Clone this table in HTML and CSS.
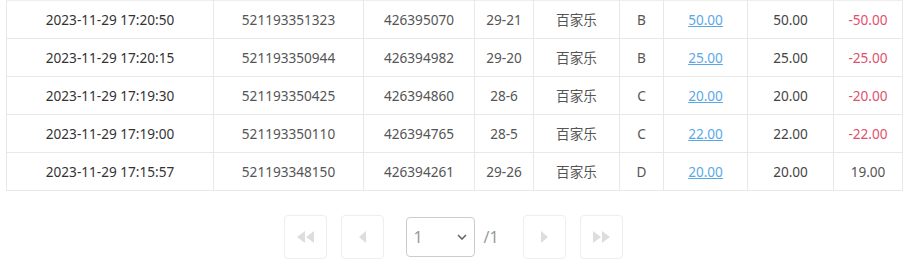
FILE: index.html
```html
<!DOCTYPE html>
<html>
<head>
<meta charset="utf-8">
<link rel="stylesheet" href="styles.css">
</head>
<body>
<div class="wrap">
<table class="grid">
<colgroup>
<col style="width:207px"><col style="width:150px"><col style="width:111px"><col style="width:59px"><col style="width:86px"><col style="width:44px"><col style="width:84px"><col style="width:86px"><col style="width:69px">
</colgroup>
<tbody>
<tr><td class="dt">2023-11-29 17:20:50</td><td>521193351323</td><td>426395070</td><td>29-21</td><td>百家乐</td><td>B</td><td><a class="lnk">50.00</a></td><td class="dk">50.00</td><td class="neg">-50.00</td></tr>
<tr><td class="dt">2023-11-29 17:20:15</td><td>521193350944</td><td>426394982</td><td>29-20</td><td>百家乐</td><td>B</td><td><a class="lnk">25.00</a></td><td class="dk">25.00</td><td class="neg">-25.00</td></tr>
<tr><td class="dt">2023-11-29 17:19:30</td><td>521193350425</td><td>426394860</td><td>28-6</td><td>百家乐</td><td>C</td><td><a class="lnk">20.00</a></td><td class="dk">20.00</td><td class="neg">-20.00</td></tr>
<tr><td class="dt">2023-11-29 17:19:00</td><td>521193350110</td><td>426394765</td><td>28-5</td><td>百家乐</td><td>C</td><td><a class="lnk">22.00</a></td><td class="dk">22.00</td><td class="neg">-22.00</td></tr>
<tr><td class="dt">2023-11-29 17:15:57</td><td>521193348150</td><td>426394261</td><td>29-26</td><td>百家乐</td><td>D</td><td><a class="lnk">20.00</a></td><td class="dk">20.00</td><td>19.00</td></tr>
</tbody>
</table>
<div class="pager">
<button class="pbtn"><svg width="20" height="12" viewBox="0 0 20 12"><path d="M9 0 L1 6 L9 12 Z M18 0 L10 6 L18 12 Z" fill="#ddd"/></svg></button>
<button class="pbtn"><svg width="10" height="12" viewBox="0 0 10 12"><path d="M8 0 L1 6 L8 12 Z" fill="#ddd"/></svg></button>
<div class="sel"><span class="selv">1</span><svg class="chev" width="10" height="6" viewBox="0 0 10 6"><path d="M1 1 L5 5 L9 1" stroke="#666" stroke-width="1.6" fill="none"/></svg></div>
<span class="total">/1</span>
<button class="pbtn nxt"><svg width="10" height="12" viewBox="0 0 10 12"><path d="M2 0 L9 6 L2 12 Z" fill="#ddd"/></svg></button>
<button class="pbtn"><svg width="20" height="12" viewBox="0 0 20 12"><path d="M2 0 L10 6 L2 12 Z M11 0 L19 6 L11 12 Z" fill="#ddd"/></svg></button>
</div>
</div>
</body>
</html>
```
FILE: styles.css
```css
html, body {
  margin: 0;
  padding: 0;
  background: #fff;
}
body {
  font-family: "Noto Sans", "Noto Sans CJK SC", sans-serif;
  font-size: 13.6px;
  color: #555;
}
.wrap {
  padding-left: 6px;
}
.grid {
  border-collapse: collapse;
  table-layout: fixed;
  width: 896px;
}
.grid td {
  border: 1px solid #e8e8e8;
  height: 37px;
  padding: 0;
  text-align: center;
  vertical-align: middle;
  line-height: 20px;
}
.grid tr:first-child td {
  border-top-color: #eee;
}
.grid td.dt {
  color: #333;
}
.grid td.dk {
  color: #444;
}
.grid td.neg {
  color: #e0506a;
}
.lnk {
  color: #5aa8e6;
  text-decoration: underline;
}
.pager {
  display: flex;
  justify-content: center;
  align-items: center;
  margin-top: 24px;
  margin-left: -3px;
}
.pbtn {
  width: 43px;
  height: 44px;
  border: 1px solid #eee;
  border-radius: 4px;
  background: #fff;
  display: flex;
  align-items: center;
  justify-content: center;
  padding: 0;
  margin-right: 14px;
}
.pbtn.nxt {
  margin-left: 24px;
}
.pbtn:last-child {
  margin-right: 0;
}
.sel {
  width: 69px;
  height: 40px;
  box-sizing: border-box;
  border: 1px solid #ccc;
  border-radius: 4px;
  display: flex;
  align-items: center;
  justify-content: space-between;
  padding: 0 7px 0 6px;
  margin-left: 8px;
  color: #999;
  font-size: 16px;
}
.total {
  margin-left: 8px;
  color: #999;
  font-size: 16px;
}
```
